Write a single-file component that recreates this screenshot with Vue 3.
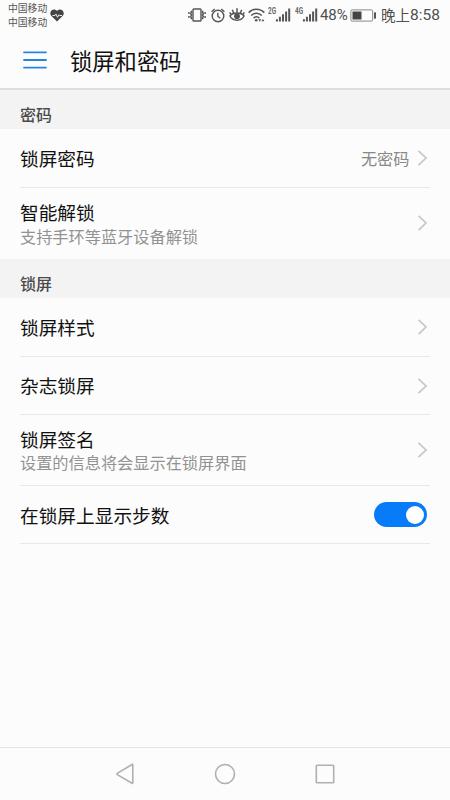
<script setup>
import { ref } from 'vue'

const stepsOn = ref(true)
const networks = ['2G', '4G']
const sections = [
  {
    title: '密码',
    rows: [
      { label: '锁屏密码', value: '无密码' },
      { label: '智能解锁', note: '支持手环等蓝牙设备解锁', last: true },
    ],
  },
  {
    title: '锁屏',
    rows: [
      { label: '锁屏样式' },
      { label: '杂志锁屏', short: true },
      { label: '锁屏签名', note: '设置的信息将会显示在锁屏界面' },
      { label: '在锁屏上显示步数', toggle: true, short: true },
    ],
  },
]
</script>

<template>
  <div class="screen">
    <div class="status">
      <div class="carriers">
        <span>中国移动</span>
        <span>中国移动</span>
      </div>
      <svg class="heart" width="14" height="13" viewBox="0 0 14 13">
        <path d="M7 12.5 1.2 6.8C-.2 5.300 .1 2.600 1.700 1.300 3.300 0 5.700 .2 7 2 8.300 .2 10.700 0 12.300 1.300 13.900 2.600 14.200 5.300 12.800 6.800Z" fill="#444" />
        <path d="M2.500 6.500H5L6 5 7.500 8.300 9 5.800 9.600 6.500H12" fill="none" stroke="#fcfcfc" stroke-width=".9" />
      </svg>
      <div class="indicators">
        <svg class="vibrate" width="18" height="14" viewBox="0 0 18 14" fill="none" stroke="#555" stroke-width="1.400">
          <rect x="5" y="1" width="8" height="12" rx="0.800" />
          <path d="M3 2.800 3.600 4.200 2.600 5.600 3.600 7 2.600 8.400 3.600 9.800 3 11.200M15 2.800 14.400 4.200 15.400 5.600 14.400 7 15.400 8.400 14.400 9.800 15 11.200" />
          <path d="M.9 4V6M.9 8V10M17.100 4V6M17.100 8V10" />
        </svg>
        <svg class="alarm" width="14" height="15" viewBox="0 0 14 15" fill="none" stroke="#555" stroke-width="1.400">
          <circle cx="7" cy="8" r="5.800" />
          <path d="M.6 3.700 3.700 .9M13.400 3.700 10.300 .9M6.800 4.800V8.200L9.200 10.200" />
        </svg>
        <svg class="eye" width="16" height="15" viewBox="0 0 16 15" fill="none" stroke="#555" stroke-width="1.500">
          <path d="M1 9C3.500 4.900 12.500 4.900 15 9 12.500 14.600 3.500 14.600 1 9Z" />
          <circle cx="8" cy="9.200" r="2.900" fill="#555" stroke="none" />
          <path d="M8 5.500V1.200M4.600 6 3.300 2.800M11.400 6 12.700 2.800M2 7.500 .7 5.300M14 7.500 15.300 5.300" />
        </svg>
        <svg class="wifi" width="17" height="14" viewBox="0 0 17 14" fill="none" stroke="#555" stroke-width="1.600">
          <path d="M.7 4.600C5 .1 12 .1 16.300 4.600M3.200 7.500C6.300 4.400 10.700 4.400 13.800 7.500M5.600 10.100C7.500 8.300 9.500 8.300 11.400 10.100" />
          <circle cx="8.200" cy="12.300" r="1.300" fill="#555" stroke="none" />
          <path d="M10.300 11.300H13.300L11.800 13.700ZM13.400 13.300H16.400L14.900 10.900Z" fill="#555" stroke="none" />
        </svg>
        <div v-for="net in networks" :key="net" class="signal">
          <svg width="23" height="16" viewBox="0 0 23 16">
            <text class="net" x="0" y="6.800" textLength="8" lengthAdjust="spacingAndGlyphs">{{ net }}</text>
            <path d="M8.900 14.500V12.200M11.900 14.500V9.800M15 14.500V7.200M18.100 14.500V4.500M21.200 14.500V1.500" fill="none" stroke="#555" stroke-width="2" />
          </svg>
        </div>
        <span class="percent">48%</span>
        <svg class="battery" width="27" height="13" viewBox="0 0 27 13">
          <rect x=".9" y=".9" width="21.800" height="11.200" rx="1.200" fill="none" stroke="#888" stroke-width="1" />
          <path d="M2.500 2.500H11.500V10.500H2.500Z" fill="#444" />
          <rect x="24" y="3.300" width="2" height="6.400" rx=".6" fill="#555" />
        </svg>
        <span class="clock"><span class="period">晚上</span>8:58</span>
      </div>
    </div>

    <header class="header">
      <svg width="24" height="20" viewBox="0 0 24 20">
        <path d="M1 2.300H23M1 10H23M1 17.600H23" stroke="#2583e2" stroke-width="1.800" stroke-linecap="round" />
      </svg>
      <h1>锁屏和密码</h1>
    </header>

    <main class="content">
      <section v-for="section in sections" :key="section.title">
        <h2>{{ section.title }}</h2>
        <div
          v-for="row in section.rows"
          :key="row.label"
          class="row"
          :class="{ tall: row.note, short: row.short, last: row.last }"
        >
          <div class="texts">
            <span class="label">{{ row.label }}</span>
            <span v-if="row.note" class="note">{{ row.note }}</span>
          </div>
          <span v-if="row.value" class="value">{{ row.value }}</span>
          <button v-if="row.toggle" class="switch" :class="{ on: stepsOn }" @click="stepsOn = !stepsOn">
            <span class="knob"></span>
          </button>
          <svg v-else class="chevron" width="11" height="18" viewBox="0 0 11 18">
            <path d="M1.500 1.800 9 9 1.500 16.200" fill="none" stroke="#c6c6c6" stroke-width="1.700" />
          </svg>
        </div>
      </section>
    </main>

    <nav class="nav">
      <svg width="24" height="24" viewBox="0 0 24 24"><path d="M19.800 2.800V20.800Q19.800 21.700 19 21.200L4.300 12.600Q3.500 12 4.300 11.400L19 2.500Q19.800 2 19.800 2.800Z" /></svg>
      <svg width="24" height="24" viewBox="0 0 24 24"><circle cx="12" cy="12" r="9.500" /></svg>
      <svg width="24" height="24" viewBox="0 0 24 24"><rect x="3.300" y="3.300" width="17.400" height="17.400" rx=".8" /></svg>
    </nav>
  </div>
</template>

<style>
body {
  background: #fcfcfc;
}
</style>

<style scoped>
.screen {
  display: flex;
  flex-direction: column;
  box-sizing: border-box;
  width: 450px;
  height: 800px;
  overflow: hidden;
  background: #fcfcfc;
  color: #111;
  font-family: "Noto Sans CJK SC", sans-serif;
}
.status {
  display: flex;
  flex: none;
  height: 31px;
  box-sizing: border-box;
  padding: 0 10px 0 8px;
}
.carriers {
  display: flex;
  flex-direction: column;
  padding-top: 2px;
  font-size: 9.8px;
  line-height: 13.5px;
  color: #555;
}
.heart {
  margin: 9px 0 0 3px;
}
.indicators {
  display: flex;
  align-items: center;
  height: 30px;
  margin-left: auto;
  color: #505050;
}
.alarm {
  margin-left: 5px;
}
.eye {
  margin: 0 0 1px 4px;
}
.wifi {
  margin-left: 3px;
}
.signal {
  display: flex;
  margin-left: 3.5px;
}
.net {
  font: bold 8.5px Roboto, sans-serif;
  fill: #666;
}
.percent {
  width: 27.5px;
  margin-left: 2px;
  font: 15px/30px Roboto, sans-serif;
}
.battery {
  margin-left: 3px;
}
.clock {
  display: flex;
  align-items: center;
  margin-left: 3.5px;
  font: 15.5px/32px Roboto, sans-serif;
}
.period {
  font: 14.6px/30px "Noto Sans CJK SC", sans-serif;
}
.header {
  display: flex;
  flex: none;
  align-items: center;
  gap: 23px;
  height: 59px;
  box-sizing: border-box;
  padding: 0 23px;
  border-bottom: 2px solid #dedede;
}
h1 {
  margin: 0;
  font-size: 22.3px;
  font-weight: 400;
  line-height: 32px;
}
.content {
  flex: 1;
}
h2 {
  height: 39px;
  margin: 0;
  box-sizing: border-box;
  padding: 8px 20px 0;
  background: #f3f3f3;
  color: #4a4a4a;
  font-size: 16px;
  font-weight: 500;
  line-height: 32px;
}
.row {
  display: flex;
  align-items: center;
  height: 59px;
  box-sizing: border-box;
  margin: 0 20px;
  border-bottom: 1px solid #e8e8e8;
}
.row.short {
  height: 58px;
}
.row.tall {
  height: 71px;
}
.row.last {
  padding-bottom: 1px;
  border-bottom: 0;
}
.texts {
  display: flex;
  flex: 1;
  flex-direction: column;
}
.row:not(.tall) .texts {
  padding-bottom: 2px;
}
.row:last-child .texts {
  padding-bottom: 0;
}
.label {
  font-size: 18.7px;
  line-height: 25px;
}
.note {
  color: #929292;
  font-size: 16.2px;
  line-height: 23px;
}
.row.last .note {
  padding-top: 1px;
  margin-bottom: -1px;
}
.value {
  margin-right: 7.5px;
  color: #888;
  font-size: 16.2px;
  line-height: 24px;
}
.chevron {
  margin-right: 2px;
}
.switch {
  display: flex;
  justify-content: flex-start;
  width: 53px;
  height: 25px;
  margin-right: 3.5px;
  padding: 3.5px 2.5px;
  box-sizing: border-box;
  border: 0;
  border-radius: 13px;
  background: #bbb;
}
.switch.on {
  justify-content: flex-end;
  background: #087cf8;
}
.knob {
  width: 18px;
  height: 18px;
  border-radius: 50%;
  background: #fff;
}
.nav {
  display: flex;
  flex: none;
  align-items: center;
  justify-content: center;
  gap: 76px;
  height: 53px;
  box-sizing: border-box;
  border-top: 1px solid #e5e5e5;
}
.nav svg {
  fill: none;
  stroke: #b0b0b0;
  stroke-width: 1.6;
}
</style>
